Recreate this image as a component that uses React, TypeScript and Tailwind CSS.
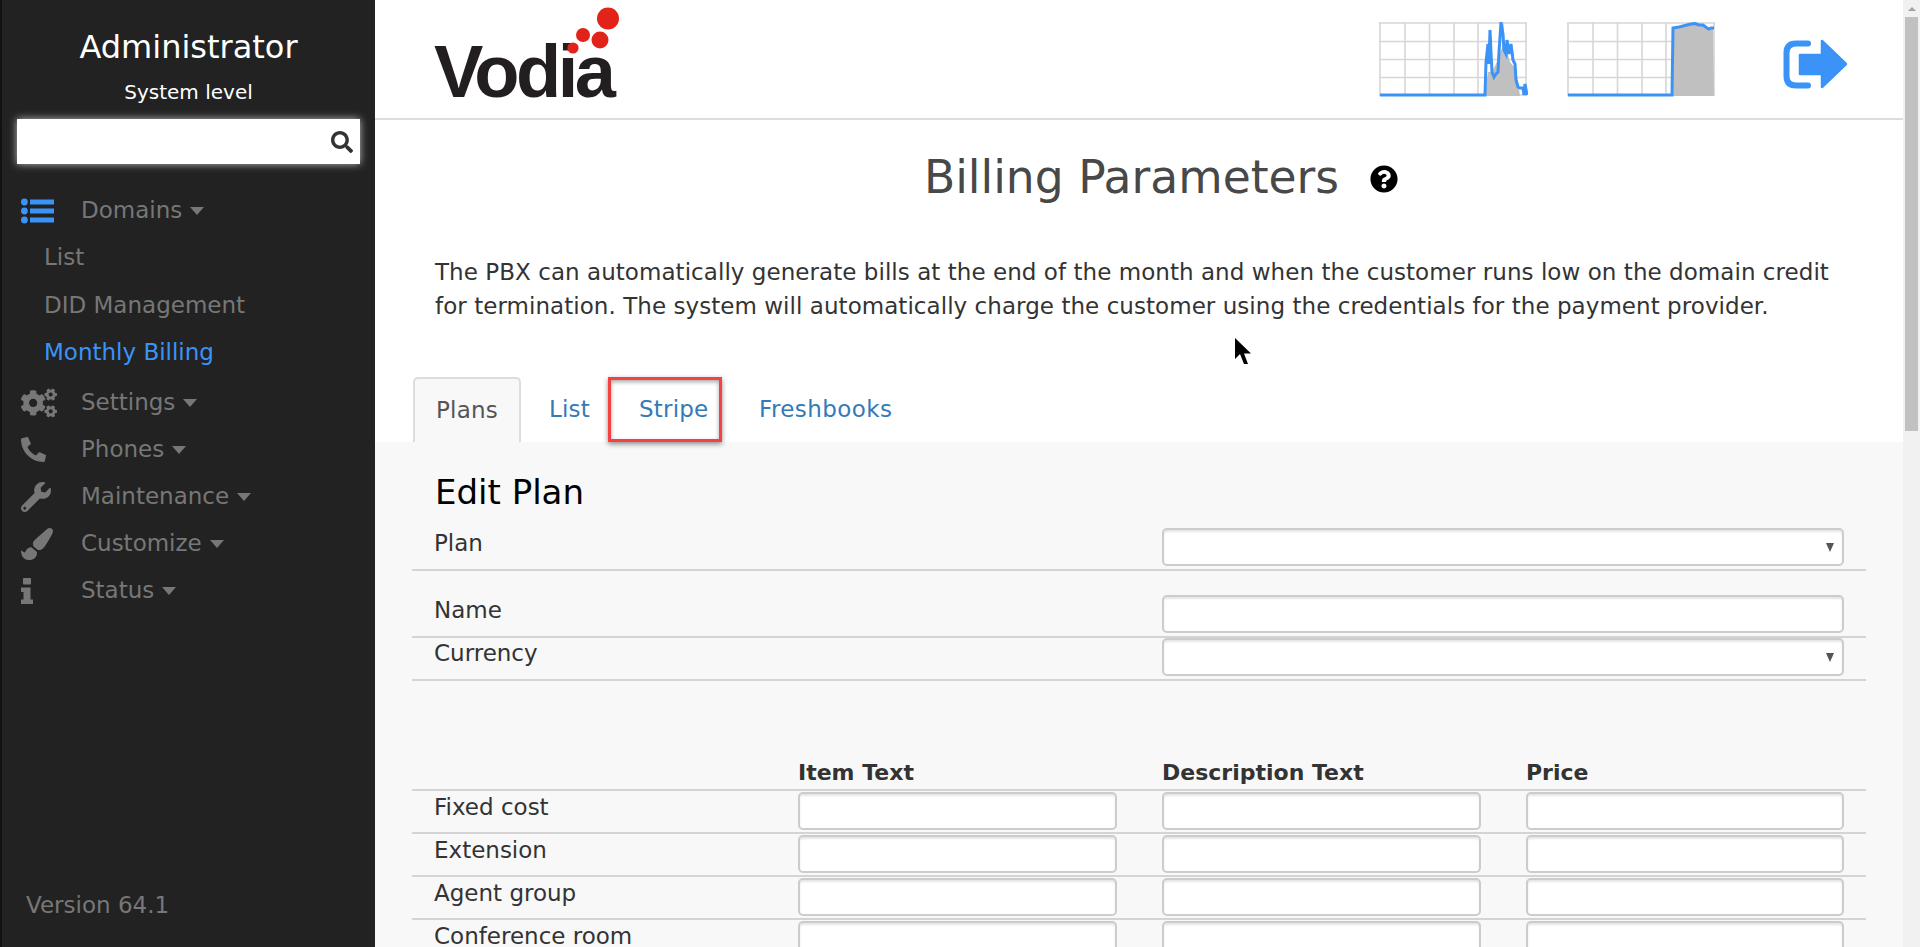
import React from "react";
import { FaCogs, FaPhoneAlt, FaWrench, FaPaintBrush, FaSearch, FaQuestionCircle } from "react-icons/fa";

const font = { fontFamily: "'DejaVu Sans', sans-serif" };

function Caret() {
  return <span className="ml-[8px] inline-block w-0 h-0 border-x-[7px] border-t-[8px] border-x-transparent border-t-[#777] align-middle" />;
}

function MenuItem({ icon, label }: { icon: React.ReactNode; label: string }) {
  return (
    <div className="flex items-center h-[47px] text-[#777] text-[23px]">
      <div className="w-[79px] pl-[19px] flex items-center text-[#777]">{icon}</div>
      <span>{label}</span>
      <Caret />
    </div>
  );
}

function InfoIcon() {
  return (
    <svg width="12" height="26" viewBox="0 0 12 26" fill="currentColor">
      <rect x="2" y="0" width="8" height="6.5" rx="1" />
      <path d="M0 9.5 H9.5 V21.5 H12 V26 H0 V21.5 H2.5 V14 H0 Z" />
    </svg>
  );
}

function ListIcon() {
  return (
    <svg width="33" height="26" viewBox="0 0 33 26" fill="currentColor">
      <circle cx="3.4" cy="4" r="3.4" />
      <circle cx="3.4" cy="13" r="3.4" />
      <circle cx="3.4" cy="22" r="3.4" />
      <rect x="9" y="1.5" width="24" height="5" />
      <rect x="9" y="10.5" width="24" height="5" />
      <rect x="9" y="19.5" width="24" height="5" />
    </svg>
  );
}

function LogoutIcon() {
  return (
    <svg width="65" height="52" viewBox="0 0 65 52" fill="none">
      <path d="M25 5.5 H13 Q3.5 5.5 3.5 15 V38 Q3.5 47.5 13 47.5 H25" stroke="#3b93f7" strokeWidth="6" strokeLinecap="round" />
      <path d="M17 17 H39 V3 L63 26 L39 49 V36 H17 Z" fill="#3b93f7" stroke="#3b93f7" strokeWidth="2.5" strokeLinejoin="round" />
    </svg>
  );
}

function Sidebar() {
  return (
    <aside className="w-[375px] shrink-0 h-[947px] bg-[#222] border-l-2 border-[#111] flex flex-col relative">
      <div className="text-center text-white text-[32px] leading-[36px] pt-[29px]">Administrator</div>
      <div className="text-center text-white text-[20px] leading-[24px] mt-[15px]">System level</div>
      <div className="mt-[15px] ml-[15px] w-[343px] h-[45px] bg-white shadow-[0_0_8px_rgba(255,255,255,0.7)] flex items-center justify-end pr-[7px] text-[#333]">
        <FaSearch size={22} />
      </div>
      <div className="mt-[23px]">
        <div className="flex items-center h-[47px] text-[#777] text-[23px]">
          <div className="w-[79px] pl-[19px] flex items-center text-[#3b93f7]"><ListIcon /></div>
          <span>Domains</span>
          <Caret />
        </div>
        <div className="pl-[42px] text-[23px] leading-[47px] text-[#777]">List</div>
        <div className="pl-[42px] text-[23px] leading-[48px] text-[#777]">DID Management</div>
        <div className="pl-[42px] text-[23px] leading-[47px] text-[#3b93f7] mb-[3px]">Monthly Billing</div>
        <MenuItem icon={<FaCogs size={36} />} label="Settings" />
        <MenuItem icon={<FaPhoneAlt size={25} />} label="Phones" />
        <MenuItem icon={<FaWrench size={30} />} label="Maintenance" />
        <MenuItem icon={<FaPaintBrush size={32} />} label="Customize" />
        <MenuItem icon={<InfoIcon />} label="Status" />
      </div>
      <div className="mt-auto mb-[27px] pl-[24px] text-[#777] text-[23px] leading-[30px]">Version 64.1</div>
    </aside>
  );
}

function Logo() {
  return (
    <div className="relative w-[190px] h-[118px] ml-[59px]">
      <span
        className="absolute left-0 top-[29px] text-[#231f20] font-bold text-[74px] leading-[85px] tracking-[-3.5px]"
        style={{ fontFamily: "'Liberation Sans', sans-serif" }}
      >
        Vodia
      </span>
      <svg className="absolute left-0 top-0" width="190" height="118" viewBox="0 0 190 118">
        <circle cx="174" cy="18.5" r="11" fill="#e2231a" />
        <circle cx="166" cy="40" r="8.5" fill="#e2231a" />
        <circle cx="149" cy="35" r="7" fill="#e2231a" />
        <circle cx="139" cy="48" r="5.6" fill="#e2231a" />
      </svg>
    </div>
  );
}

function Chart({ fill, line }: { fill: string; line: string }) {
  const v = [1, 26, 50.5, 75, 99, 124, 147];
  const h = [1, 19.5, 37.5, 55.5, 73];
  return (
    <svg width="149" height="76" viewBox="0 0 149 76" className="block">
      {v.map((x) => <line key={x} x1={x} x2={x} y1="0.5" y2="74" stroke="#d6d6d6" strokeWidth="1.6" />)}
      {h.map((y) => <line key={y} x1="0" x2="148" y1={y} y2={y} stroke="#d6d6d6" strokeWidth="1.6" />)}
      <polygon points={fill} fill="#c0c0c0" />
      <polyline points={line} fill="none" stroke="#3b93f7" strokeWidth="3" />
    </svg>
  );
}

function Header() {
  return (
    <header className="h-[120px] shrink-0 border-b-2 border-[#ddd] bg-white flex items-start">
      <Logo />
      <div className="ml-auto mt-[22px] flex items-start">
        <Chart
          fill="106,74 109,50 113,50 117,42 122,28 126,22 131,40 136,46 139,60 141,74"
          line="1,73 106,73 107,40 109,22 110,42 111,8 112,30 113,50 115,55 117,52 119,50 120,30 122,0 124,12 125,28 127,32 128,18 129,25 130,32 132,22 134,38 136,42 137,58 139,65 141,66 144,66 145,73 146,62 148,73"
        />
        <div className="w-[39px]" />
        <Chart
          fill="105,74 105,6 128,1 146,7 147,74"
          line="1,73 105,73 106,6 112,5 116,4 120,3 124,2 128,1.5 132,3 136,3 140,6 142,7 144,6 147,6"
        />
      </div>
      <div className="ml-[67px] mr-[55px] mt-[38px]"><LogoutIcon /></div>
    </header>
  );
}

function Field({ className = "" }: { className?: string }) {
  return <input className={"block h-[38px] bg-white border-2 border-[#ccc] rounded-[5px] shadow-[inset_0_2px_2px_rgba(0,0,0,0.1)] " + className} />;
}

function Select() {
  return (
    <div className="relative w-[682px]">
      <select className="appearance-none block w-full h-[38px] bg-white border-2 border-[#ccc] rounded-[5px] shadow-[inset_0_2px_2px_rgba(0,0,0,0.1)]" />
      <span className="absolute right-[10px] top-[15px] w-0 h-0 border-x-[4px] border-t-[9px] border-x-transparent border-t-[#555]" />
    </div>
  );
}

function FormRow({ label, children, className = "" }: { label: string; children: React.ReactNode; className?: string }) {
  return (
    <div className={"grid grid-cols-[750px_704px] border-b-2 border-[#d4d4d4] pb-[3px] " + className}>
      <div className="pl-[22px] text-[#333] text-[23px] leading-[30px]">{label}</div>
      <div>{children}</div>
    </div>
  );
}

function PriceRow({ label }: { label: string }) {
  return (
    <div className="grid grid-cols-[386px_364px_364px_340px] h-[43px] border-b-2 border-[#d4d4d4] pt-[1px] text-[#333] text-[23px] leading-[30px]">
      <div className="pl-[22px]">{label}</div>
      <div><Field className="w-[319px]" /></div>
      <div><Field className="w-[319px]" /></div>
      <div><Field className="w-[318px]" /></div>
    </div>
  );
}

function Main() {
  return (
    <main className="flex-1 min-w-0 h-[947px] flex flex-col overflow-hidden bg-white relative">
      <Header />
      <div className="shrink-0 flex justify-center items-center pt-[27px] h-[88px]">
        <h1 className="text-[#484848] text-[45.6px] leading-[52px] ml-[44px]">Billing Parameters</h1>
        <div className="ml-[31px] mt-[2px] text-black"><FaQuestionCircle size={28} /></div>
      </div>
      <p className="shrink-0 mt-[47px] pl-[60px] pr-[60px] text-[#333] text-[23px] tracking-[0.05px] leading-[34px]">
        The PBX can automatically generate bills at the end of the month and when the customer runs low on the domain credit for termination. The system will automatically charge the customer using the credentials for the payment provider.
      </p>
      <nav className="shrink-0 mt-[54px] pl-[38px] flex items-stretch h-[65px] text-[#337ab7] text-[23px] tracking-[0.2px]">
        <div className="w-[108px] h-[65px] border-2 border-b-0 border-[#ddd] rounded-t-[5px] bg-[#f8f8f8] text-[#555] flex items-center justify-center">Plans</div>
        <div className="ml-[28px] w-[59px] flex items-center">List</div>
        <div className="w-[114px] h-[65px] border-[3px] border-[#f44242] shadow-[0_2px_5px_rgba(0,0,0,0.45),inset_0_2px_4px_rgba(0,0,0,0.35)] pl-[28px] flex items-center relative z-10">Stripe</div>
        <div className="ml-[37px] flex items-center tracking-[0.4px]">Freshbooks</div>
      </nav>
      <section className="flex-1 bg-[#f8f8f8] pl-[37px] pr-[37px]">
        <h2 className="text-black text-[34px] leading-[40px] pl-[23px] mt-[30px]">Edit Plan</h2>
        <div className="mt-[16px]">
          <FormRow label="Plan"><Select /></FormRow>
          <FormRow label="Name" className="pt-[24px]"><Field className="w-[682px]" /></FormRow>
          <FormRow label="Currency"><Select /></FormRow>
        </div>
        <div className="grid grid-cols-[386px_364px_364px_340px] mt-[78px] h-[32px] border-b-2 border-[#d4d4d4] text-[#333] text-[22px] font-bold leading-[28px]">
          <div />
          <div>Item Text</div>
          <div>Description Text</div>
          <div>Price</div>
        </div>
        <PriceRow label="Fixed cost" />
        <PriceRow label="Extension" />
        <PriceRow label="Agent group" />
        <PriceRow label="Conference room" />
      </section>
      <svg className="absolute left-[860px] top-[338px]" width="18" height="28" viewBox="0 0 18 28">
        <path d="M0 0 L0 21 L5 16 L9 26 L13 26 L9 15.5 L16 15.5 Z" fill="#000" />
      </svg>
    </main>
  );
}

function Scrollbar() {
  return (
    <div className="w-[17px] shrink-0 h-[947px] bg-[#f1f1f1] flex flex-col items-center">
      <div className="h-[17px] flex items-center justify-center">
        <span className="w-0 h-0 border-x-[4px] border-b-[4px] border-x-transparent border-b-[#a3a3a3]" />
      </div>
      <div className="w-[13px] h-[414px] bg-[#c1c1c1]" />
    </div>
  );
}

export default function App() {
  return (
    <div className="flex w-[1920px] h-[947px] overflow-hidden" style={font}>
      <Sidebar />
      <Main />
      <Scrollbar />
    </div>
  );
}
